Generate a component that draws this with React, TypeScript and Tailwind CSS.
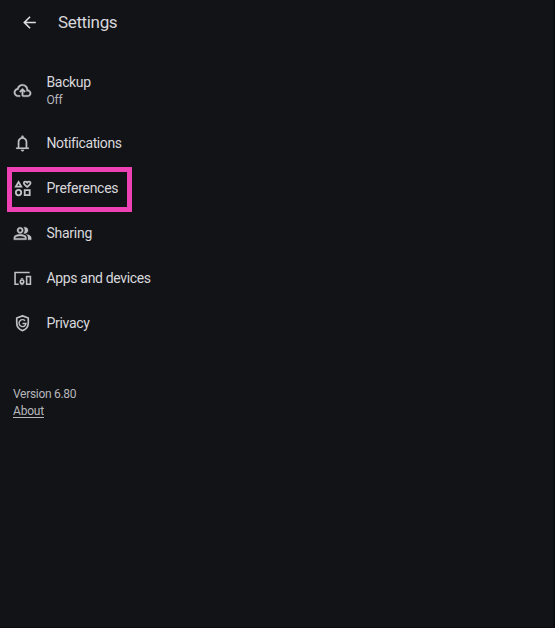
import type { ReactNode } from 'react';

function Icon({ children }: { children: ReactNode }) {
  return (
    <svg viewBox="0 0 24 24" className="size-[19px] shrink-0 fill-[#c0c0c6]" aria-hidden="true">
      {children}
    </svg>
  );
}

const BackupIcon = () => (
  <Icon>
    <path d="M6.5 20q-2.280 0-3.890-1.570Q1 16.850 1 14.580q0-1.950 1.180-3.480 1.180-1.530 3.080-1.950.62-2.300 2.500-3.730Q9.630 4 12 4q2.930 0 4.960 2.040Q19 8.070 19 11q1.730.2 2.860 1.490Q23 13.780 23 15.500q0 1.880-1.310 3.190Q20.380 20 18.500 20H13q-.82 0-1.410-.59Q11 18.830 11 18v-5.150L9.400 14.400 8 13l4-4 4 4-1.400 1.400-1.600-1.550V18h5.500q1.050 0 1.770-.72.73-.73.73-1.780 0-1.050-.73-1.770Q19.550 13 18.500 13H17v-2q0-2.070-1.460-3.540Q14.080 6 12 6 9.930 6 8.460 7.460 7 8.930 7 11h-.5q-1.450 0-2.470 1.030Q3 13.050 3 14.500q0 1.450 1.030 2.480Q5.050 18 6.500 18H9v2z" stroke="#c0c0c6" strokeWidth=".4" />
  </Icon>
);

const BellIcon = () => (
  <Icon>
    <path d="M4 19v-2h2v-7c0-2.780 1.670-5.050 4.500-5.800V3.500a1.500 1.500 0 0 1 3 0v.7C16.330 4.950 18 7.220 18 10v7h2v2zM12 22a2 2 0 0 1-2-2h4a2 2 0 0 1-2 2zM8 17h8v-7c0-2.200-1.800-4-4-4s-4 1.800-4 4z" stroke="#c0c0c6" strokeWidth=".2" />
  </Icon>
);

const ShapesIcon = () => (
  <Icon>
    <g fill="none" stroke="#c0c0c6" strokeWidth="2.300">
      <path d="M7 3.800 10.400 9.600H3.600z" />
      <circle cx="7" cy="17.200" r="3.400" />
      <path d="M14.800 14.100h6.300v6.300h-6.300z" />
      <path d="M17.900 10c-2.300-1.900-4.300-3.200-4.300-4.800 0-2.200 2.900-2.700 4.300-.7 1.400-2 4.300-1.500 4.300.7 0 1.600-2 2.900-4.300 4.800z" />
    </g>
  </Icon>
);

const PeopleIcon = () => (
  <Icon>
    <path d="M1 20v-2.800c0-.57.150-1.090.440-1.560.290-.48.680-.84 1.160-1.090a14.700 14.700 0 0 1 3.150-1.160 13.760 13.760 0 0 1 6.500 0c1.070.260 2.120.640 3.150 1.160.480.250.870.610 1.160 1.090.290.470.440.990.440 1.560V20zm18 0v-3c0-.73-.2-1.440-.610-2.110a4.900 4.900 0 0 0-1.740-1.740c.85.100 1.650.270 2.400.510.750.240 1.450.540 2.100.890.600.330 1.060.700 1.380 1.110.320.410.470.860.470 1.340v3zM9 12a3.850 3.850 0 0 1-2.820-1.180A3.850 3.850 0 0 1 5 8c0-1.100.390-2.040 1.180-2.820A3.850 3.850 0 0 1 9 4c1.100 0 2.040.390 2.820 1.180C12.610 5.960 13 6.900 13 8c0 1.100-.39 2.040-1.180 2.820A3.850 3.850 0 0 1 9 12zm10-4c0 1.100-.39 2.040-1.180 2.820A3.850 3.850 0 0 1 15 12c-.18 0-.42-.02-.7-.06a6 6 0 0 1-.7-.14A5.870 5.870 0 0 0 15 8c0-.7-.12-1.370-.36-2.010A6.500 6.500 0 0 0 13.600 4.200c.230-.080.470-.14.700-.160A5.150 5.150 0 0 1 15 4c1.100 0 2.040.390 2.820 1.180C18.610 5.960 19 6.900 19 8zM3 18h12v-.8a.93.930 0 0 0-.5-.8 12.200 12.200 0 0 0-2.720-1.010 11.600 11.600 0 0 0-5.560 0A12.200 12.200 0 0 0 3.500 16.400a.93.930 0 0 0-.5.800zm6-8c.550 0 1.020-.2 1.410-.59.390-.39.590-.86.590-1.410 0-.55-.2-1.020-.59-1.410A1.930 1.930 0 0 0 9 6c-.55 0-1.020.200-1.410.590C7.200 6.980 7 7.450 7 8c0 .550.200 1.020.590 1.410.390.390.860.590 1.410.590z" stroke="#c0c0c6" strokeWidth=".4" />
  </Icon>
);

const DevicesIcon = () => (
  <Icon>
    <g fill="none" stroke="#c0c0c6" strokeWidth="2">
      <path d="M21 4.500H2.600V19.200H7.200" />
      <circle cx="11.400" cy="16" r="2.200" />
      <path d="M10.200 13.600v-1.600h2.400v1.600M10.200 18.200v1.600h2.400v-1.600" strokeWidth="1" />
      <path d="M17.200 9.500h4.800v9.700h-4.800z" />
    </g>
  </Icon>
);

const PrivacyIcon = () => (
  <Icon>
    <g fill="none" stroke="#c0c0c6" strokeWidth="2.100">
      <path d="M12 2.400 4.700 5.100v6c0 4.900 3 8.600 7.300 9.900 4.300-1.300 7.300-5 7.300-9.900v-6z" strokeLinejoin="round" />
      <path d="M15.200 8.500a4.400 4.400 0 1 0 1.200 3.400H12" strokeWidth="1.800" />
    </g>
  </Icon>
);

interface RowProps {
  icon: ReactNode;
  label: string;
  spacing: string;
  highlighted?: boolean;
}

function Row({ icon, label, spacing, highlighted = false }: RowProps) {
  return (
    <li className="relative flex h-[45px] items-center gap-[14.500px] pl-[13px]">
      <span className="pt-px">{icon}</span>
      <span className={`text-sm leading-5 ${spacing}`}>{label}</span>
      {highlighted && (
        <span className="pointer-events-none absolute top-[2px] left-[7px] h-[45px] w-[125px] border-[5px] border-[#ee42b4]" />
      )}
    </li>
  );
}

export default function App() {
  return (
    <main className="h-[628px] w-full overflow-hidden border-r-2 border-b border-r-[#0b0c10] border-b-[#0e0b10] bg-[#121317] font-['Roboto',sans-serif] text-[#d8d8dc]">
      <header className="flex h-[45px] items-center pl-[19.500px]">
        <svg viewBox="0 0 24 24" className="size-[19px] fill-[#dedee2]" aria-hidden="true">
          <path d="M20 11H7.830l5.590-5.590L12 4l-8 8 8 8 1.410-1.410L7.830 13H20z" />
        </svg>
        <h1 className="mb-0.5 ml-[19.500px] text-[17px] leading-6 tracking-[-0.350px]">Settings</h1>
      </header>
      <ul className="pt-[21px]">
        <li className="flex h-[54px] items-start gap-[14.500px] pl-[13px]">
          <span className="mt-[15px]"><BackupIcon /></span>
          <div className="pt-1.5">
            <p className="text-sm leading-5 tracking-[-0.350px]">Backup</p>
            <p className="text-xs leading-[17px] tracking-[-0.200px] text-[#b6b6bb]">Off</p>
          </div>
        </li>
        <Row icon={<BellIcon />} label="Notifications" spacing="tracking-[-0.380px]" />
        <Row icon={<ShapesIcon />} label="Preferences" spacing="tracking-[-0.270px]" highlighted />
        <Row icon={<PeopleIcon />} label="Sharing" spacing="tracking-[-0.260px]" />
        <Row icon={<DevicesIcon />} label="Apps and devices" spacing="tracking-[-0.340px]" />
        <Row icon={<PrivacyIcon />} label="Privacy" spacing="tracking-[-0.300px]" />
      </ul>
      <footer className="pt-[41px] pl-[13px] text-xs leading-[17px] text-[#b6b6bb]">
        <p className="tracking-[-0.300px]">Version 6.80</p>
        <a className="tracking-[-0.200px] underline underline-offset-2">About</a>
      </footer>
    </main>
  );
}
